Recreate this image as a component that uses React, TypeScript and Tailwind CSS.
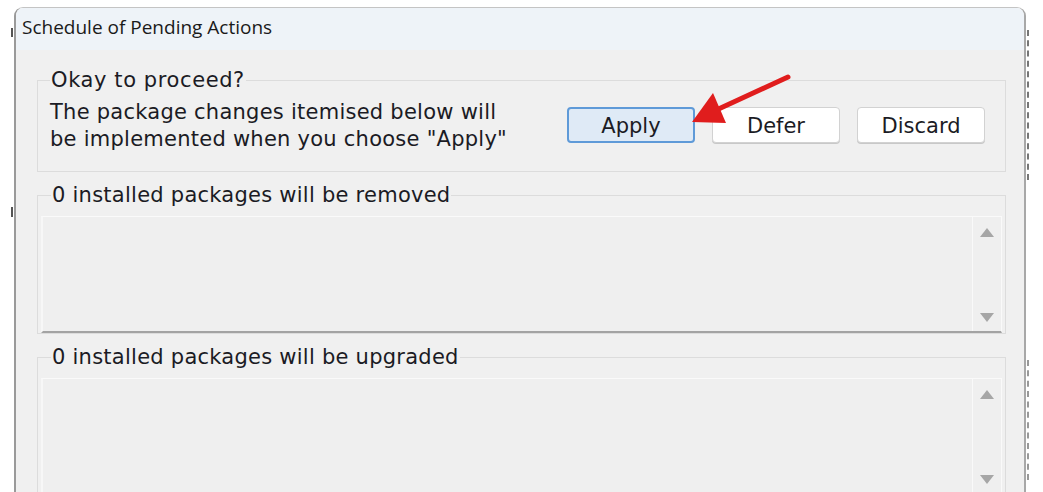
import React from "react";

const body = { fontFamily: '"DejaVu Sans", Verdana, sans-serif' } as const;

function ListBox({ height }: { height: number }) {
  return (
    <div
      className="flex border-t border-l-2 border-r border-b-2 border-t-[#fafafa] border-l-[#f7f7f7] border-r-[#fafafa] border-b-[#a3a3a3] bg-[#efefef]"
      style={{ height }}
    >
      <div className="flex-1" />
      <div className="w-[29px] flex flex-col items-center justify-between border-l border-l-[#f9f9f9] pt-[11px] pb-[9px]">
        <svg width="14" height="9" viewBox="0 0 14 9">
          <path d="M7 0 L14 9 L0 9 Z" fill="#a6a6a6" />
        </svg>
        <svg width="14" height="9" viewBox="0 0 14 9">
          <path d="M0 0 L14 0 L7 9 Z" fill="#a6a6a6" />
        </svg>
      </div>
    </div>
  );
}

function Btn({ label, primary }: { label: string; primary?: boolean }) {
  return (
    <button
      className={
        "h-[36px] w-[128px] rounded-[4px] text-[21px] text-[#1b1b24] flex items-center justify-center pt-[3px] " +
        (primary
          ? "bg-[#dfeaf6] border-2 border-[#5f9ad8]"
          : "bg-white border border-[#d2d2d2] shadow-[0_1px_0_#c8c8c8]")
      }
      style={body}
    >
      {label}
    </button>
  );
}

export default function App() {
  return (
    <div className="relative w-[1043px] h-[492px] bg-white overflow-hidden">
      {/* fragments of background window */}
      <div className="absolute left-[11px] top-[28px] w-[2px] h-[9px] bg-[#555]" />
      <div className="absolute left-[11px] top-[207px] w-[2px] h-[10px] bg-[#555]" />
      <div className="absolute left-[1027px] top-[30px] w-[2px] h-[150px] border-l-2 border-dashed border-[#777]" />
      <div className="absolute left-[1027px] top-[360px] w-[2px] h-[120px] border-l-2 border-dashed border-[#999]" />

      <div className="ml-[14px] mt-[7px] w-[1012px] h-[500px] rounded-t-[9px] border-t border-l-2 border-r-2 border-t-[#c4c4c4] border-l-[#9a9a9a] border-r-[#a8a8a8] overflow-hidden flex flex-col">
        <div
          className="h-[42px] bg-[#eef3f8] pl-[6px] pt-[5px] text-[19px] text-[#1a1a1a] leading-[28px]"
          style={{ fontFamily: '"Open Sans", "Noto Sans", sans-serif' }}
        >
          Schedule of Pending Actions
        </div>
        <div className="flex-1 bg-[#f0f0f0] pl-[21px] pr-[18px] pt-[18px] flex flex-col text-[#1b1b24]" style={body}>
          <fieldset className="border border-[#dcdcdc] h-[104px] pl-[12px] pr-[20px]">
            <legend className="text-[21px] leading-[24px] tracking-[0.6px] px-[1px]">Okay to proceed?</legend>
            <div className="flex items-start justify-between">
              <div className="text-[21px] leading-[27px] tracking-[0.25px] pt-[7px]">
                <div>The package changes itemised below will</div>
                <div>be implemented when you choose "Apply"</div>
              </div>
              <div className="flex gap-[17px] pt-[15px]">
                <Btn label="Apply" primary />
                <Btn label="Defer" />
                <Btn label="Discard" />
              </div>
            </div>
          </fieldset>

          <fieldset className="mt-[11px] border border-[#dcdcdc] pl-[3px] pr-[3px]">
            <legend className="ml-[10px] text-[21px] leading-[24px] tracking-[0.25px] px-[1px]">
              0 installed packages will be removed
            </legend>
            <div className="mt-[9px]">
              <ListBox height={117} />
            </div>
          </fieldset>

          <fieldset className="mt-[11px] border border-[#dcdcdc] pl-[3px] pr-[3px]">
            <legend className="ml-[10px] text-[21px] leading-[24px] tracking-[0.25px] px-[1px]">
              0 installed packages will be upgraded
            </legend>
            <div className="mt-[9px]">
              <ListBox height={117} />
            </div>
          </fieldset>
        </div>
      </div>

      {/* red annotation arrow */}
      <svg className="absolute left-0 top-0" width="1043" height="492" viewBox="0 0 1043 492">
        <line x1="788" y1="77" x2="712" y2="112" stroke="#e01d1d" strokeWidth="5" strokeLinecap="round" />
        <path d="M692 122 L713 93 L726 123 Z" fill="#e01d1d" />
      </svg>
    </div>
  );
}
